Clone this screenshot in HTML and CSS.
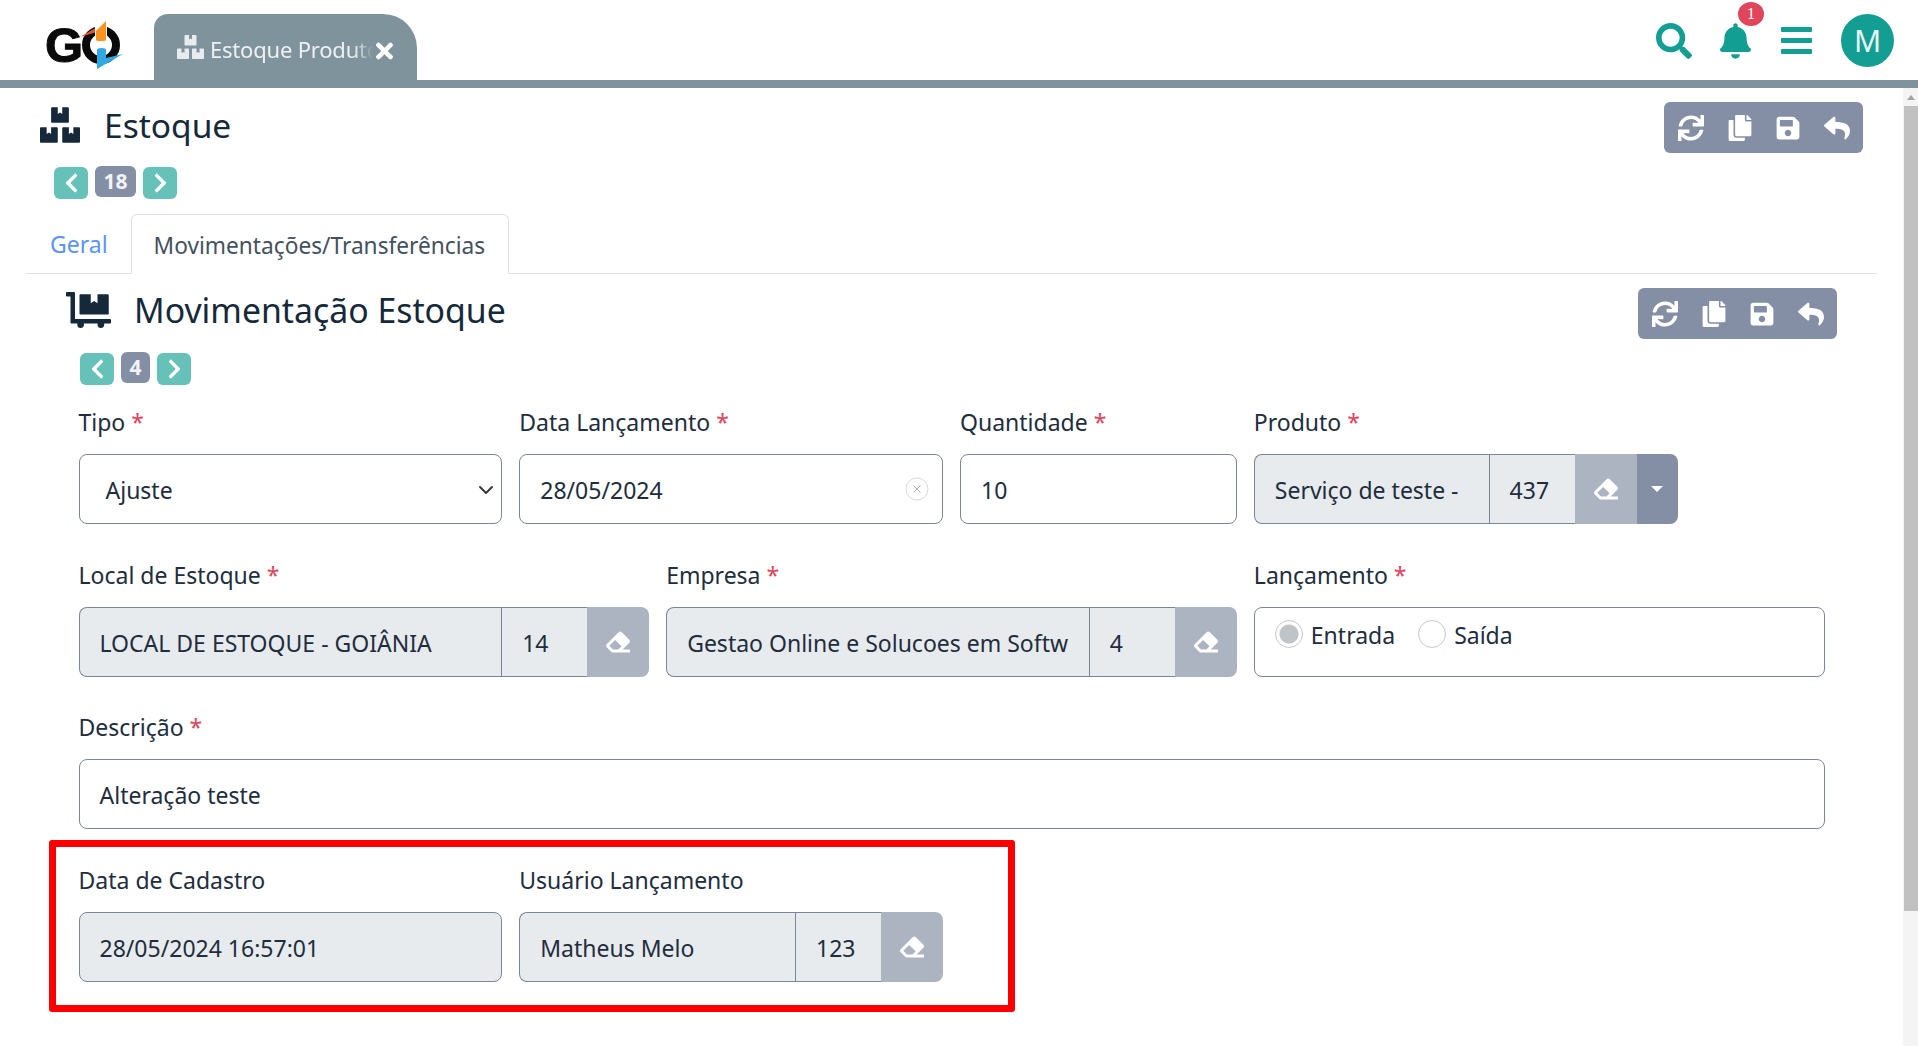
FILE: index.html
```html
<!DOCTYPE html>
<html lang="pt-BR">
<head>
  <meta charset="UTF-8">
  <meta name="viewport" content="width=device-width, initial-scale=1.0">
  <title>Estoque</title>
  <link rel="stylesheet" href="styles.css">
</head>
<body>
  <svg class="sprites" width="0" height="0">
    <symbol id="i-search" viewBox="0 0 512 512"><path d="M505 442.7L405.3 343c-4.5-4.5-10.6-7-17-7H372c27.6-35.3 44-79.7 44-128C416 93.1 322.9 0 208 0S0 93.1 0 208s93.1 208 208 208c48.3 0 92.7-16.4 128-44v16.3c0 6.4 2.5 12.5 7 17l99.7 99.7c9.4 9.4 24.6 9.4 33.9 0l28.3-28.3c9.4-9.4 9.4-24.6.1-34zM208 336c-70.7 0-128-57.2-128-128 0-70.7 57.2-128 128-128 70.7 0 128 57.2 128 128 0 70.7-57.2 128-128 128z"/></symbol>
    <symbol id="i-bell" viewBox="0 0 448 512"><path d="M224 512c35.32 0 63.97-28.65 63.97-64H160.03c0 35.35 28.65 64 63.97 64zm215.39-149.71c-19.32-20.76-55.47-51.99-55.47-154.29 0-77.7-54.48-139.9-127.94-155.16V32c0-17.67-14.32-32-31.98-32s-31.98 14.33-31.98 32v20.84C118.56 68.1 64.08 130.3 64.08 208c0 102.3-36.15 133.53-55.47 154.29-6 6.45-8.66 14.16-8.61 21.71.11 16.4 12.98 32 32.1 32h383.8c19.12 0 32-15.6 32.1-32 .05-7.55-2.61-15.27-8.61-21.71z"/></symbol>
    <symbol id="i-sync" viewBox="0 0 512 512"><path d="M440.65 12.57l4 82.77A247.16 247.16 0 0 0 255.83 8C134.73 8 33.91 94.92 12.29 209.82A12 12 0 0 0 24.09 224h49.05a12 12 0 0 0 11.67-9.26 175.91 175.91 0 0 1 317-56.94l-101.46-4.86a12 12 0 0 0-12.57 12v47.41a12 12 0 0 0 12 12H500a12 12 0 0 0 12-12V12a12 12 0 0 0-12-12h-47.37a12 12 0 0 0-11.98 12.57zM255.83 432a175.61 175.61 0 0 1-146-77.8l101.8 4.87a12 12 0 0 0 12.57-12v-47.4a12 12 0 0 0-12-12H12a12 12 0 0 0-12 12V500a12 12 0 0 0 12 12h47.35a12 12 0 0 0 12-12.6l-4.15-82.57A247.17 247.17 0 0 0 255.83 504c121.11 0 221.93-86.92 243.55-201.82a12 12 0 0 0-11.8-14.18h-49.05a12 12 0 0 0-11.67 9.26A175.86 175.86 0 0 1 255.83 432z"/></symbol>
    <symbol id="i-copy" viewBox="0 0 448 512"><path d="M320 448v40c0 13.255-10.745 24-24 24H24c-13.255 0-24-10.745-24-24V120c0-13.255 10.745-24 24-24h72v296c0 30.879 25.121 56 56 56h168zm0-344V0H152c-13.255 0-24 10.745-24 24v368c0 13.255 10.745 24 24 24h272c13.255 0 24-10.745 24-24V128H344c-13.2 0-24-10.8-24-24zm120.971-31.029L375.029 7.029A24 24 0 0 0 358.059 0H352v96h96v-6.059a24 24 0 0 0-7.029-16.97z"/></symbol>
    <symbol id="i-save" viewBox="0 0 448 512"><path d="M433.941 129.941l-83.882-83.882A48 48 0 0 0 316.118 32H48C21.49 32 0 53.49 0 80v352c0 26.51 21.49 48 48 48h352c26.51 0 48-21.49 48-48V163.882a48 48 0 0 0-14.059-33.941zM224 416c-35.346 0-64-28.654-64-64 0-35.346 28.654-64 64-64s64 28.654 64 64c0 35.346-28.654 64-64 64zm96-304.52V212c0 6.627-5.373 12-12 12H76c-6.627 0-12-5.373-12-12V108c0-6.627 5.373-12 12-12h228.52c3.183 0 6.235 1.264 8.485 3.515l3.48 3.48A11.996 11.996 0 0 1 320 111.48z"/></symbol>
    <symbol id="i-reply" viewBox="0 0 512 512"><path d="M8.309 189.836L184.313 37.851C199.719 24.546 224 35.347 224 56.015v80.053c160.629 1.839 288 34.032 288 186.258 0 61.441-39.581 122.309-83.333 154.132-13.653 9.931-33.111-2.533-28.077-18.631 45.344-145.012-21.507-183.51-176.59-185.742V360c0 20.7-24.3 31.453-39.687 18.164l-176.004-152c-11.071-9.562-11.086-26.753 0-36.328z"/></symbol>
    <symbol id="i-eraser" viewBox="0 0 512 512"><path d="M497.941 273.941c18.745-18.745 18.745-49.137 0-67.882l-160-160c-18.745-18.745-49.136-18.746-67.883 0l-256 256c-18.745 18.745-18.745 49.137 0 67.882l96 96A48.004 48.004 0 0 0 144 480h356c6.627 0 12-5.373 12-12v-40c0-6.627-5.373-12-12-12H355.883l142.058-142.059zm-302.627-62.627l137.373 137.373L265.373 416H150.628l-80-80 124.686-124.686z"/></symbol>
    <symbol id="i-left" viewBox="0 0 320 512"><path d="M34.52 239.03L228.87 44.69c9.37-9.37 24.57-9.37 33.94 0l22.67 22.67c9.36 9.36 9.37 24.52.04 33.9L131.49 256l154.02 154.75c9.34 9.38 9.32 24.54-.04 33.9l-22.67 22.67c-9.37 9.37-24.57 9.37-33.94 0L34.52 272.97c-9.37-9.37-9.37-24.57 0-33.94z"/></symbol>
    <symbol id="i-right" viewBox="0 0 320 512"><path d="M285.476 272.971L91.132 467.314c-9.373 9.373-24.569 9.373-33.941 0l-22.667-22.667c-9.357-9.357-9.375-24.522-.04-33.901L188.505 256 34.484 101.255c-9.335-9.379-9.317-24.544.04-33.901l22.667-22.667c9.373-9.373 24.569-9.373 33.941 0L285.475 239.03c9.373 9.372 9.373 24.568.001 33.941z"/></symbol>
    <symbol id="i-times" viewBox="0 0 352 512"><path d="M242.72 256l100.07-100.07c12.28-12.28 12.28-32.19 0-44.48l-22.24-22.24c-12.28-12.28-32.19-12.28-44.48 0L176 189.28 75.93 89.21c-12.28-12.28-32.19-12.28-44.48 0L9.21 111.45c-12.28 12.28-12.28 32.19 0 44.48L109.28 256 9.21 356.07c-12.28 12.28-12.28 32.19 0 44.48l22.24 22.24c12.28 12.28 32.2 12.28 44.48 0L176 322.72l100.07 100.07c12.28 12.28 32.2 12.28 44.48 0l22.24-22.24c12.28-12.28 12.28-32.19 0-44.48L242.72 256z"/></symbol>
    <symbol id="i-boxes" viewBox="0 0 576 512"><path d="M560 288h-80v96l-32-21.3-32 21.3v-96h-80c-8.8 0-16 7.2-16 16v192c0 8.8 7.2 16 16 16h224c8.8 0 16-7.2 16-16V304c0-8.8-7.2-16-16-16zm-384-64h224c8.8 0 16-7.2 16-16V16c0-8.8-7.2-16-16-16h-80v96l-32-21.3L256 96V0h-80c-8.8 0-16 7.2-16 16v192c0 8.8 7.2 16 16 16zm64 64h-80v96l-32-21.3L96 384v-96H16c-8.8 0-16 7.2-16 16v192c0 8.8 7.2 16 16 16h224c8.8 0 16-7.2 16-16V304c0-8.8-7.2-16-16-16z"/></symbol>
    <symbol id="i-dolly" viewBox="0 0 640 512"><path d="M208 320h384c8.8 0 16-7.2 16-16V48c0-8.8-7.2-16-16-16H448v128l-48-32-48 32V32H208c-8.8 0-16 7.2-16 16v256c0 8.8 7.2 16 16 16zm416 64H128V16c0-8.8-7.2-16-16-16H16C7.2 0 0 7.2 0 16v32c0 8.8 7.2 16 16 16h48v368c0 8.8 7.2 16 16 16h82.9c-1.8 5-2.9 10.4-2.9 16 0 26.5 21.5 48 48 48s48-21.5 48-48c0-5.6-1.2-11-2.9-16H451c-1.8 5-2.9 10.4-2.9 16 0 26.5 21.5 48 48 48s48-21.5 48-48c0-5.6-1.2-11-2.9-16H624c8.8 0 16-7.2 16-16v-32c0-8.8-7.2-16-16-16z"/></symbol>
  </svg>

  <header class="topbar">
    <div class="logo">
      <span class="logo-g">G</span>
      <svg class="logo-o" viewBox="0 0 44 50">
        <circle cx="21" cy="25" r="15" fill="none" stroke="#0a0a0a" stroke-width="8"/>
        <path d="M0 17 L17 7 V12 Z" fill="#e8502a"/>
        <rect x="15" y="4" width="12" height="24" fill="#fff"/>
        <path d="M16 11 L26 1 V20 Q26 21 21 21 Q16 21 16 20 Z" fill="#f7931e"/>
        <path d="M17 30 Q17 28 21.500 28 Q26 28 26 30 V38 L43 34 L17 49 Z" fill="#2fa8e4"/>
      </svg>
    </div>
    <div class="app-tab">
      <svg class="ic tab-ic"><use href="#i-boxes"/></svg>
      <span class="app-tab-text">Estoque Produto</span>
      <svg class="ic tab-close"><use href="#i-times"/></svg>
    </div>
    <div class="top-icons">
      <svg class="ic ic-search"><use href="#i-search"/></svg>
      <div class="bell">
        <svg class="ic ic-bell"><use href="#i-bell"/></svg>
        <span class="bell-count">1</span>
      </div>
      <div class="burger"><i></i><i></i><i></i></div>
      <div class="avatar">M</div>
    </div>
  </header>

  <div class="scrollbar"><span class="scroll-up"></span><div class="scroll-thumb"></div></div>

  <main class="page">
    <section class="head">
      <div>
        <h1 class="title"><svg class="ic title-ic"><use href="#i-boxes"/></svg>Estoque</h1>
        <div class="pager">
          <button class="pg-btn"><svg class="ic"><use href="#i-left"/></svg></button>
          <span class="pg-num">18</span>
          <button class="pg-btn"><svg class="ic"><use href="#i-right"/></svg></button>
        </div>
      </div>
      <div class="actions">
        <svg class="ic"><use href="#i-sync"/></svg>
        <svg class="ic"><use href="#i-copy"/></svg>
        <svg class="ic"><use href="#i-save"/></svg>
        <svg class="ic"><use href="#i-reply"/></svg>
      </div>
    </section>

    <nav class="tabs">
      <a class="tab">Geral</a>
      <a class="tab active">Movimentações/Transferências</a>
    </nav>

    <section class="sub">
      <div class="head sub-head">
        <div>
          <h2 class="title sub-title"><svg class="ic dolly-ic"><use href="#i-dolly"/></svg>Movimentação Estoque</h2>
          <div class="pager">
            <button class="pg-btn"><svg class="ic"><use href="#i-left"/></svg></button>
            <span class="pg-num one">4</span>
            <button class="pg-btn"><svg class="ic"><use href="#i-right"/></svg></button>
          </div>
        </div>
        <div class="actions">
          <svg class="ic"><use href="#i-sync"/></svg>
          <svg class="ic"><use href="#i-copy"/></svg>
          <svg class="ic"><use href="#i-save"/></svg>
          <svg class="ic"><use href="#i-reply"/></svg>
        </div>
      </div>

      <form class="form">
        <div class="field c3">
          <label>Tipo <b>*</b></label>
          <div class="box select">Ajuste
            <svg class="chev" viewBox="0 0 16 16"><path d="M2 5l6 6 6-6" fill="none" stroke="#343a40" stroke-width="2" stroke-linecap="round" stroke-linejoin="round"/></svg>
          </div>
        </div>
        <div class="field c3">
          <label>Data Lançamento <b>*</b></label>
          <div class="box">28/05/2024
            <svg class="clear" viewBox="0 0 24 24"><circle cx="12" cy="12" r="11" fill="none" stroke="#d8d8d8" stroke-width="1"/><path d="M8.500 8.500l7 7M15.500 8.500l-7 7" stroke="#a9adb5" stroke-width="1"/></svg>
          </div>
        </div>
        <div class="field c2">
          <label>Quantidade <b>*</b></label>
          <div class="box">10</div>
        </div>
        <div class="field c3">
          <label>Produto <b>*</b></label>
          <div class="group">
            <div class="box ro fill">Serviço de teste -</div>
            <div class="box ro code">437</div>
            <div class="erase"><svg class="ic"><use href="#i-eraser"/></svg></div>
            <div class="drop"><span class="caret"></span></div>
          </div>
        </div>
        <div class="c1"></div>

        <div class="field c4">
          <label>Local de Estoque <b>*</b></label>
          <div class="group">
            <div class="box ro fill">LOCAL DE ESTOQUE - GOIÂNIA</div>
            <div class="box ro code">14</div>
            <div class="erase end"><svg class="ic"><use href="#i-eraser"/></svg></div>
          </div>
        </div>
        <div class="field c4">
          <label>Empresa <b>*</b></label>
          <div class="group">
            <div class="box ro fill">Gestao Online e Solucoes em Softw</div>
            <div class="box ro code">4</div>
            <div class="erase end"><svg class="ic"><use href="#i-eraser"/></svg></div>
          </div>
        </div>
        <div class="field c4">
          <label>Lançamento <b>*</b></label>
          <div class="box radios">
            <span class="radio on"></span><span class="radio-text">Entrada</span>
            <span class="radio"></span><span class="radio-text">Saída</span>
          </div>
        </div>

        <div class="field c12">
          <label>Descrição <b>*</b></label>
          <div class="box">Alteração teste</div>
        </div>

        <div class="field c3">
          <label>Data de Cadastro</label>
          <div class="box ro">28/05/2024 16:57:01</div>
        </div>
        <div class="field c3">
          <label>Usuário Lançamento</label>
          <div class="group">
            <div class="box ro fill">Matheus Melo</div>
            <div class="box ro code">123</div>
            <div class="erase end"><svg class="ic"><use href="#i-eraser"/></svg></div>
          </div>
        </div>
      </form>
    </section>
  </main>

  <div class="redbox"></div>
</body>
</html>
```

FILE: styles.css
```css
* { box-sizing: border-box; }
html, body { height: 100%; }
body {
  margin: 0;
  height: 1046px;
  overflow: hidden;
  position: relative;
  background: #fff;
  color: #212d3d;
  font-family: "Noto Sans", sans-serif;
  font-size: 23px;
  line-height: 36px;
}
.sprites { position: absolute; }
.ic { display: block; fill: currentColor; }

/* top bar */
.topbar {
  height: 88px;
  border-bottom: 8px solid #7f939d;
  display: flex;
  align-items: flex-end;
}
.logo { width: 154px; height: 80px; display: flex; padding: 20px 0 0 45px; }
.logo-g {
  width: 35px;
  font-family: "Liberation Sans", sans-serif;
  font-weight: bold;
  font-size: 49px;
  line-height: 50px;
  color: #0a0a0a;
  -webkit-text-stroke: 1px #0a0a0a;
}
.logo-o { width: 44px; height: 50px; }
.app-tab {
  width: 263px;
  height: 66px;
  background: #7f939d;
  color: #eef1f2;
  border-radius: 14px 34px 0 0;
  display: flex;
  align-items: center;
  padding: 0 24px 0 23px;
  position: relative;
}
.tab-ic { width: 27px; height: 24px; flex: none; color: #e8ecee; }
.app-tab-text {
  margin-left: 6px;
  padding-top: 4px;
  width: 163px;
  overflow: hidden;
  white-space: nowrap;
  font-size: 22px;
  letter-spacing: -0.2px;
  -webkit-mask-image: linear-gradient(to right, #000 88%, transparent);
  mask-image: linear-gradient(to right, #000 88%, transparent);
}
.tab-close { position: absolute; left: 222px; top: 24px; width: 17px; height: 26px; color: #fff; }
.top-icons {
  margin-left: auto;
  height: 80px;
  width: 262px;
  display: flex;
  align-items: center;
  position: relative;
}
.ic-search { width: 36px; height: 36px; color: #129e92; margin-top: 2px; }
.bell { position: relative; margin-left: 28px; color: #129e92; margin-top: 2px; }
.ic-bell { width: 31px; height: 36px; }
.bell-count {
  position: absolute;
  left: 18px;
  top: -21px;
  width: 26px;
  height: 24px;
  border-radius: 50%;
  background: #e0455b;
  color: #fff;
  font-family: "Liberation Serif", serif;
  font-size: 16px;
  line-height: 24px;
  text-align: center;
}
.burger {
  margin-left: 30px;
  width: 31px;
  height: 27px;
  display: flex;
  flex-direction: column;
  justify-content: space-between;
  margin-top: 1px;
}
.burger i { display: block; height: 5px; border-radius: 1px; background: #129e92; }
.avatar {
  margin-left: 29px;
  width: 53px;
  height: 53px;
  border-radius: 50%;
  background: #129e92;
  color: #e8f4f3;
  font-size: 30px;
  line-height: 53px;
  text-align: center;
  flex: none;
}

/* scrollbar */
.scrollbar {
  position: absolute;
  right: 0;
  top: 88px;
  bottom: 0;
  width: 15px;
  background: #f4f4f4;
}
.scroll-up {
  display: block;
  margin: 7px auto 0;
  width: 0;
  height: 0;
  border: 4px solid transparent;
  border-top: 0;
  border-bottom: 5px solid #a3a3a3;
}
.scroll-thumb { margin: 6px 0 0 1px; height: 805px; background: #c1c1c1; }

/* page */
.page { padding: 0 41px 0 26px; }
.head { display: flex; justify-content: space-between; align-items: flex-start; padding-top: 12px; }
.head > .actions { margin: 2px 14px 0 0; }
.title {
  margin: 0;
  height: 50px;
  font-size: 33.5px;
  line-height: 48px;
  font-weight: 400;
  color: #15293a;
  display: flex;
  align-items: center;
}
.title-ic { width: 40px; height: 36px; margin: 0 24px 0 14px; flex: none; }
.pager { display: flex; align-items: flex-start; gap: 7px; margin: 17px 0 0 28px; }
.pg-btn {
  width: 34px;
  height: 32px;
  padding: 0;
  border: 0;
  border-radius: 6px;
  background: #66c2b8;
  color: #fff;
  display: flex;
  align-items: center;
  justify-content: center;
}
.pg-btn .ic { width: 15px; height: 22px; }
.pg-num {
  width: 41px;
  height: 31px;
  margin-top: -1px;
  border-radius: 6px;
  background: #848fa5;
  color: #f2f3f5;
  font-size: 21px;
  font-weight: 700;
  line-height: 31px;
  text-align: center;
}
.pg-num.one { width: 29px; }
.actions {
  width: 199px;
  height: 51px;
  background: #848fa5;
  border-radius: 6px;
  color: #fff;
  display: flex;
  align-items: center;
  justify-content: space-between;
  padding: 0 13px 0 14px;
}
.actions .ic { width: 26px; height: 26px; }

/* tabs */
.tabs {
  display: flex;
  height: 60px;
  margin-top: 15px;
  border-bottom: 1px solid #dee2e6;
}
.tab { padding: 0 23px 0 24px; line-height: 61px; color: #5b94f8; }
.tab.active {
  width: 378px;
  padding: 0 0 0 22px;
  white-space: nowrap;
  color: #44505f;
  font-size: 22.700px;
  border: 1px solid #dee2e6;
  border-bottom: 1px solid #fff;
  border-radius: 6px 6px 0 0;
  height: 60px;
}

/* sub section */
.sub { padding: 0 13px 0 52.500px; }
.sub-head { padding-top: 18px; margin-left: -12.500px; }
.sub-head > .actions { margin: -4px 27px 0 0; }
.sub-title { height: 36px; font-size: 33.800px; }
.dolly-ic { width: 45px; height: 36px; margin-right: 23px; flex: none; color: #15293a; }
.sub-head .pager { margin: 25px 0 0 14px; }

/* form */
.form {
  display: grid;
  grid-template-columns: repeat(12, 1fr);
  column-gap: 17px;
  margin: 22px 39.500px 0 0;
}
.c1 { grid-column: span 1; }
.c2 { grid-column: span 2; }
.c3 { grid-column: span 3; }
.c4 { grid-column: span 4; }
.c12 { grid-column: span 12; }
.field { height: 152.67px; }
.field label { display: block; height: 47px; line-height: 30px; }
.field label b { color: #e0455b; font-weight: 400; }
.box {
  height: 70px;
  border: 1px solid #7a8699;
  border-radius: 8px;
  background: #fff;
  padding: 0 20px;
  line-height: 70px;
  white-space: nowrap;
  overflow: hidden;
  position: relative;
}
.ro { background: #e8ebee; }
.select { padding-left: 26px; }
.chev { position: absolute; right: 7px; top: 27px; width: 16px; height: 16px; }
.clear { position: absolute; right: 13px; top: 22px; width: 24px; height: 24px; }
.group { display: flex; height: 70px; }
.group .box { border-radius: 0; }
.group .fill { flex: 1; min-width: 0; border-right: 0; border-radius: 8px 0 0 8px; }
.group .code { width: 86px; flex: none; border-right: 0; }
.erase {
  width: 62px;
  flex: none;
  background: #adb4c1;
  color: #fff;
  display: flex;
  align-items: center;
  justify-content: center;
}
.erase .ic { width: 24px; height: 24px; }
.erase.end { border-radius: 0 8px 8px 0; }
.drop {
  width: 41px;
  flex: none;
  background: #848fa5;
  border-radius: 0 8px 8px 0;
  display: flex;
  align-items: center;
  justify-content: center;
}
.caret { width: 0; height: 0; border: 6px solid transparent; border-top-color: #fff; border-bottom: 0; }
.radios { display: flex; align-items: flex-start; line-height: 54px; }
.radio {
  width: 28px;
  height: 28px;
  margin-top: 12px;
  border: 1px solid #c8c8c8;
  border-radius: 50%;
  background: #fff;
  flex: none;
}
.radio.on { background: radial-gradient(circle, #bfc4c8 0 9px, #fff 10px); }
.radio-text { margin: 0 23px 0 8px; }

/* annotation */
.redbox {
  position: absolute;
  left: 49px;
  top: 840px;
  width: 966px;
  height: 172px;
  border: 7px solid #f00;
  border-radius: 3px;
  pointer-events: none;
}
```
